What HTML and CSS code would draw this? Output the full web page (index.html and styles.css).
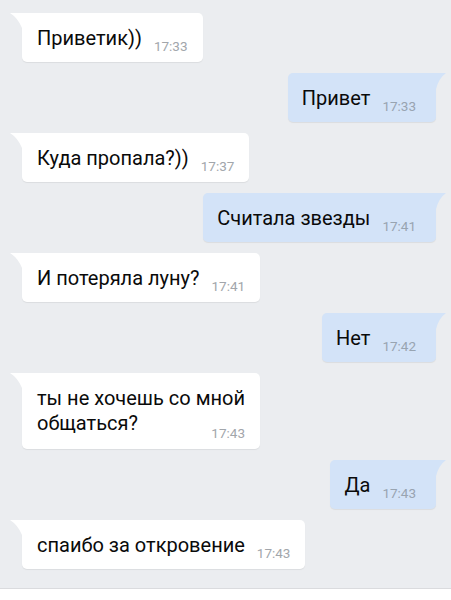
FILE: index.html
```html
<!DOCTYPE html>
<html lang="ru">
<head>
    <meta charset="UTF-8">
    <title>Диалог</title>
    <link rel="stylesheet" href="styles.css">
</head>
<body>
    <div class="chat">
        <div class="msg in">Приветик))<span class="time">17:33</span></div>
        <div class="msg out">Привет<span class="time">17:33</span></div>
        <div class="msg in">Куда пропала?))<span class="time">17:37</span></div>
        <div class="msg out">Считала звезды<span class="time">17:41</span></div>
        <div class="msg in">И потеряла луну?<span class="time">17:41</span></div>
        <div class="msg out">Нет<span class="time">17:42</span></div>
        <div class="msg in long">ты не хочешь со мной<br>общаться?<span class="time">17:43</span></div>
        <div class="msg out">Да<span class="time">17:43</span></div>
        <div class="msg in">спаибо за откровение<span class="time">17:43</span></div>
    </div>
    <div class="composer"></div>
</body>
</html>
```

FILE: styles.css
```css
* {
    box-sizing: border-box;
}
html, body {
    margin: 0;
    height: 100%;
}
body {
    font-family: Roboto, 'Noto Sans', sans-serif;
    background-color: #ebedf0;
    display: flex;
    flex-direction: column;
}
.chat {
    display: flex;
    flex-direction: column;
    gap: 11px;
    padding: 13px 15px 19px 22px;
}
.msg {
    position: relative;
    max-width: 320px;
    padding: 13px 15px 11px 15px;
    font-size: 20px;
    line-height: 25px;
    color: #0a0a0a;
    border-radius: 5px;
    box-shadow: 0 1px 1px rgba(0,0,0,0.07);
}
.msg.long {
    padding-bottom: 13px;
}
.msg::before {
    content: "";
    position: absolute;
    top: 0;
    width: 12px;
    height: 15px;
    background: inherit;
}
.in {
    align-self: flex-start;
    background-color: #fff;
    border-top-left-radius: 0;
}
.in::before {
    left: -12px;
    clip-path: path('M0 0 H12 V15 Q8 5 0 0 Z');
}
.out {
    align-self: flex-end;
    background-color: #d3e3f8;
    padding: 13px 20px 11px 14px;
    border-top-right-radius: 0;
}
.out::before {
    right: -10px;
    width: 10px;
    height: 16px;
    clip-path: path('M0 0 H10 Q3 5 0 16 Z');
}
.time {
    float: right;
    margin: 12px 0 -6px 12px;
    font-size: 13.5px;
    line-height: 16px;
    color: #a2a6ab;
}
.long .time {
    margin-top: 14px;
}
.out .time {
    color: #98a4b1;
}
.composer {
    flex: 1;
    background-color: #fff;
    border-top: 1px solid #dadbde;
}
```
